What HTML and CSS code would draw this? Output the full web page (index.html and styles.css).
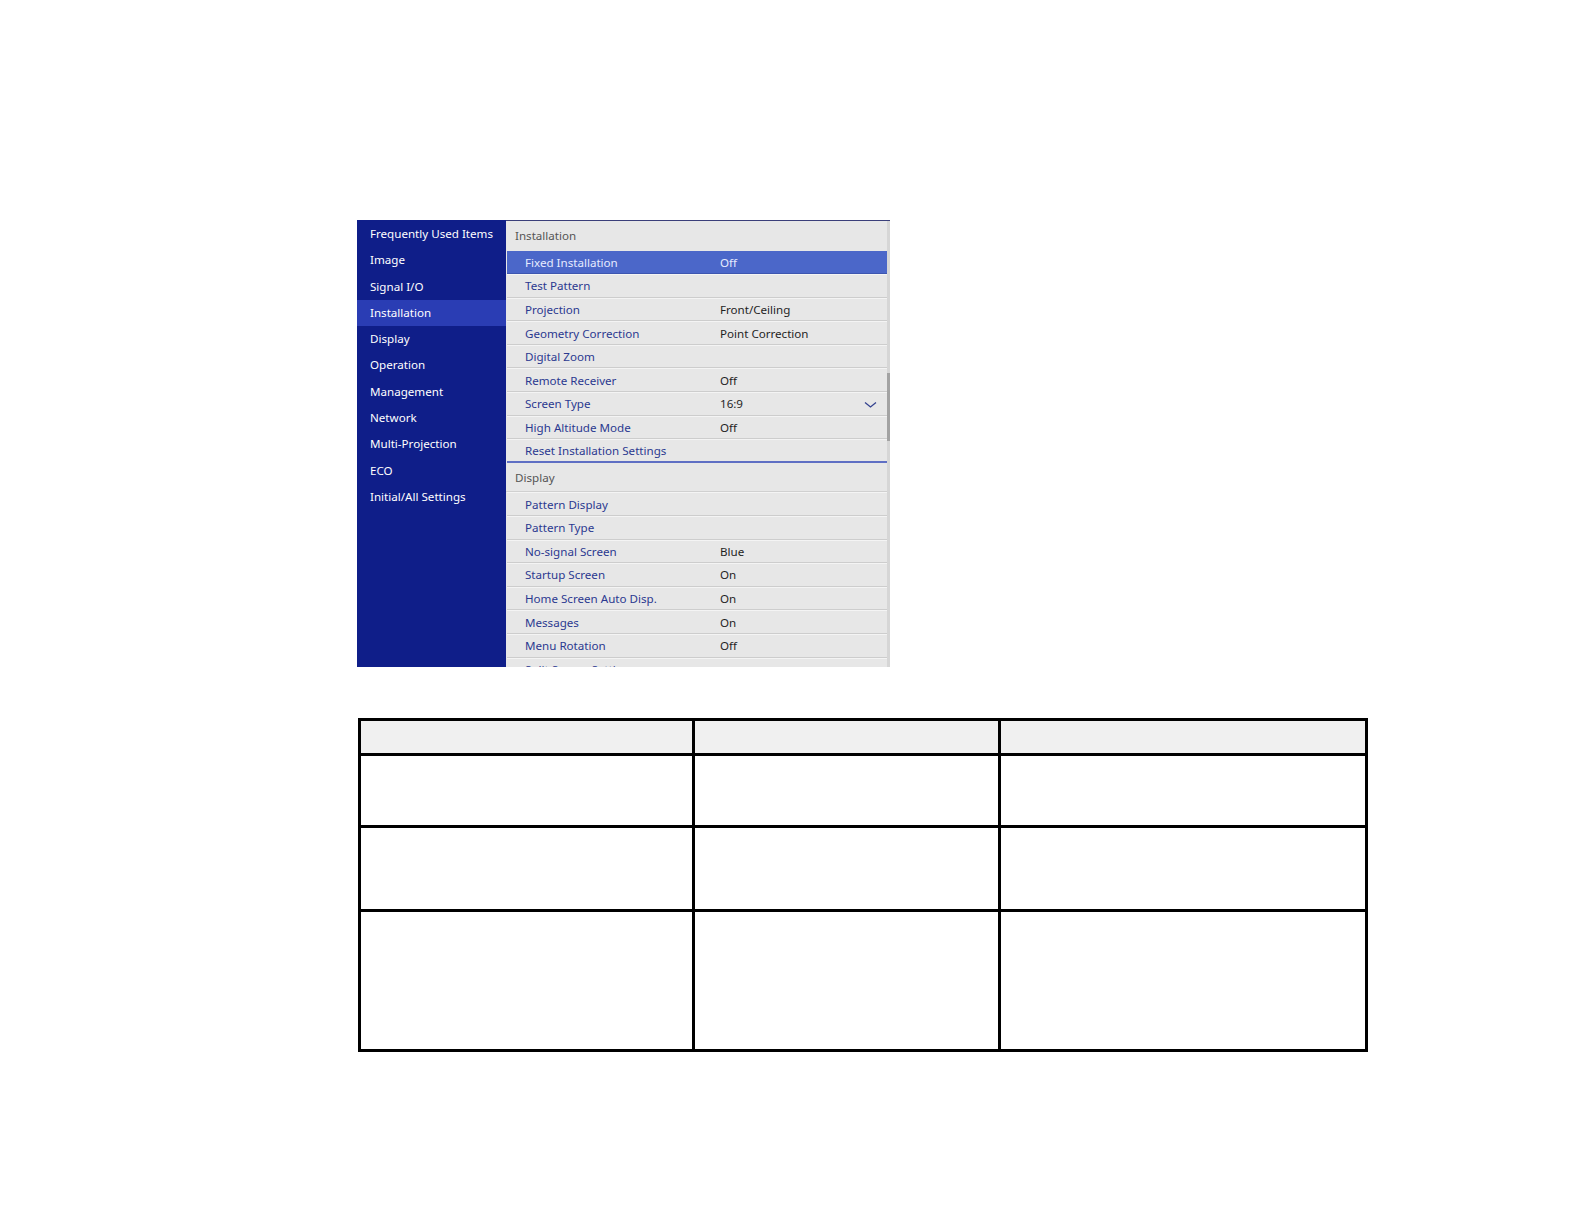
FILE: index.html
```html
<!DOCTYPE html>
<html lang="en">
<head>
<meta charset="utf-8">
<title>Installation Menu</title>
<link rel="stylesheet" href="styles.css">
</head>
<body>
<div class="page">
  <div class="menu">
    <nav class="sidebar">
      <div class="nav-item">Frequently Used Items</div>
      <div class="nav-item">Image</div>
      <div class="nav-item">Signal I/O</div>
      <div class="nav-item active">Installation</div>
      <div class="nav-item">Display</div>
      <div class="nav-item">Operation</div>
      <div class="nav-item">Management</div>
      <div class="nav-item">Network</div>
      <div class="nav-item">Multi-Projection</div>
      <div class="nav-item">ECO</div>
      <div class="nav-item">Initial/All Settings</div>
    </nav>
    <div class="content">
      <div class="list">
        <div class="section-title">Installation</div>
        <div class="row selected"><span class="label">Fixed Installation</span><span class="value">Off</span></div>
        <div class="row"><span class="label">Test Pattern</span><span class="value"></span></div>
        <div class="row"><span class="label">Projection</span><span class="value">Front/Ceiling</span></div>
        <div class="row"><span class="label">Geometry Correction</span><span class="value">Point Correction</span></div>
        <div class="row"><span class="label">Digital Zoom</span><span class="value"></span></div>
        <div class="row"><span class="label">Remote Receiver</span><span class="value">Off</span></div>
        <div class="row"><span class="label">Screen Type</span><span class="value">16:9</span>
          <svg class="chev" width="13" height="8" viewBox="0 0 13 8"><polyline points="1,1.5 6.5,6 12,1.5" fill="none" stroke="#34428f" stroke-width="1.3"/></svg>
        </div>
        <div class="row"><span class="label">High Altitude Mode</span><span class="value">Off</span></div>
        <div class="row last"><span class="label">Reset Installation Settings</span><span class="value"></span></div>
        <div class="section-title second">Display</div>
        <div class="row"><span class="label">Pattern Display</span><span class="value"></span></div>
        <div class="row"><span class="label">Pattern Type</span><span class="value"></span></div>
        <div class="row"><span class="label">No-signal Screen</span><span class="value">Blue</span></div>
        <div class="row"><span class="label">Startup Screen</span><span class="value">On</span></div>
        <div class="row"><span class="label">Home Screen Auto Disp.</span><span class="value">On</span></div>
        <div class="row"><span class="label">Messages</span><span class="value">On</span></div>
        <div class="row"><span class="label">Menu Rotation</span><span class="value">Off</span></div>
        <div class="row"><span class="label">Split Screen Settings</span><span class="value"></span></div>
      </div>
      <div class="scrollbar"><div class="thumb"></div></div>
    </div>
  </div>

  <table class="grid">
    <colgroup>
      <col class="c1"><col class="c2"><col class="c3">
    </colgroup>
    <tr class="head"><td></td><td></td><td></td></tr>
    <tr class="r1"><td></td><td></td><td></td></tr>
    <tr class="r2"><td></td><td></td><td></td></tr>
    <tr class="r3"><td></td><td></td><td></td></tr>
  </table>
</div>
</body>
</html>
```
FILE: styles.css
```css
html, body {
  margin: 0;
  padding: 0;
  background: #ffffff;
}
.page {
  padding: 220px 0 0 357px;
  font-family: "Noto Sans", "Open Sans", sans-serif;
}
.menu {
  display: flex;
  width: 533px;
  height: 447px;
  overflow: hidden;
}
.sidebar {
  width: 149px;
  flex: none;
  background: #0f1e89;
  display: flex;
  flex-direction: column;
  padding-top: 1px;
  box-sizing: border-box;
}
.nav-item {
  height: 26.3px;
  line-height: 26.3px;
  padding-left: 13px;
  color: #ffffff;
  font-size: 11.6px;
  white-space: nowrap;
}
.nav-item.active {
  background: #2a3db4;
}
.content {
  flex: 1;
  display: flex;
  background: #e7e7e7;
  border-top: 1px solid #3a3f7a;
  box-sizing: border-box;
}
.list {
  flex: 1;
  display: flex;
  flex-direction: column;
}
.section-title {
  height: 29.5px;
  line-height: 30px;
  padding-left: 9px;
  font-size: 11.6px;
  color: #555555;
  flex: none;
}
.section-title.second {
  height: 28.5px;
  line-height: 29px;
  border-bottom: 1px solid #d0d0d0;
}
.row {
  flex: none;
  height: 23.6px;
  box-sizing: border-box;
  display: flex;
  align-items: center;
  padding-left: 18px;
  margin-left: 1px;
  border-top: 1px solid #f4f4f4;
  border-bottom: 1px solid #cdcdcd;
  font-size: 11.6px;
  position: relative;
}
.row.last {
  border-bottom: 2px solid #5f6fc4;
}
.row.selected {
  background: #4b67c9;
  border-top-color: #4b67c9;
  border-bottom-color: #3d56b0;
}
.label {
  width: 195px;
  color: #2b3990;
  white-space: nowrap;
}
.value {
  color: #1f1f1f;
  white-space: nowrap;
}
.row.selected .label,
.row.selected .value {
  color: #e6ebff;
}
.chev {
  position: absolute;
  right: 10px;
  top: 8px;
}
.scrollbar {
  width: 3px;
  flex: none;
  background: #d6d6d6;
  position: relative;
}
.thumb {
  position: absolute;
  left: 0;
  top: 152px;
  width: 3px;
  height: 68px;
  background: #a3a3a3;
}
.grid {
  margin-top: 51px;
  margin-left: 1px;
  border-collapse: separate;
  border-spacing: 0;
  table-layout: fixed;
  width: 1010px;
  border-top: 3px solid #000;
  border-left: 3px solid #000;
}
.grid col.c1 { width: 334px; }
.grid col.c2 { width: 306px; }
.grid col.c3 { width: 367px; }
.grid td {
  padding: 0;
  border-right: 3px solid #000;
  border-bottom: 3px solid #000;
  background: #ffffff;
}
.grid tr.head td { height: 32px; background: #f0f0f0; }
.grid tr.r1 td { height: 69px; }
.grid tr.r2 td { height: 81px; }
.grid tr.r3 td { height: 137px; }
```
